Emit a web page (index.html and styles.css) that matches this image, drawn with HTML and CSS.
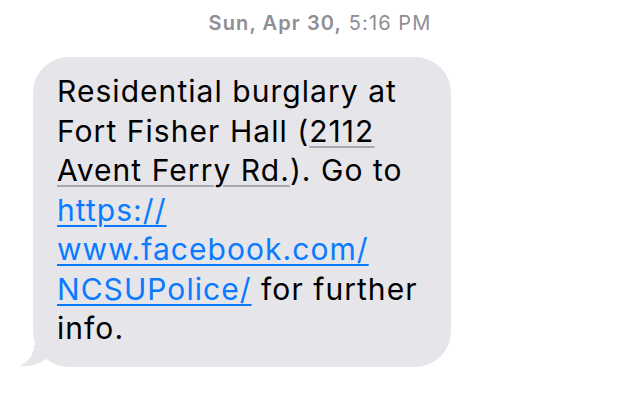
FILE: index.html
```html
<!DOCTYPE html>
<html>
<head>
<meta charset="utf-8">
<link rel="stylesheet" href="styles.css">
</head>
<body>
<div class="screen">
  <div class="stamp"><b>Sun, Apr 30,</b> 5:16 PM</div>
  <div class="row">
    <div class="bubble">
      <p class="msg">Residential burglary at Fort Fisher Hall (<span class="addr">2112 Avent Ferry Rd.</span>). Go to <a class="link" href="#">https://<br>www.facebook.com/<br>NCSUPolice/</a> for further info.</p>
      <svg class="tail" width="30" height="22" viewBox="0 0 30 22"><path d="M30 0 L14 0 C14 10 8 17 0 21 C10 22 20 19 26 14 Z" fill="#e5e5ea"/></svg>
    </div>
  </div>
</div>
</body>
</html>
```
FILE: styles.css
```css
html, body { margin: 0; padding: 0; background: #fff; }
.screen { width: 640px; height: 400px; overflow: hidden; font-family: Inter, "Noto Sans", sans-serif; }
.stamp { text-align: center; padding-top: 12px; font-size: 20px; color: #8e8e93; line-height: 23px; letter-spacing: 1.1px; }
.stamp b { font-weight: 600; }
.row { padding: 22px 0 0 33px; }
.bubble { position: relative; width: 418px; box-sizing: border-box; background: #e5e5ea; border-radius: 36px; padding: 15px 18px 18px 24px; }
.msg { margin: 0; font-size: 30px; line-height: 39.5px; color: #000; letter-spacing: 1.05px; }
.addr { text-decoration: underline; text-decoration-color: #a8a8ad; text-underline-offset: 4px; text-decoration-thickness: 2px; }
.link { color: #0a7aff; text-decoration: underline; text-underline-offset: 4px; text-decoration-thickness: 2px; }
.tail { position: absolute; left: -13px; bottom: 0; }
```
